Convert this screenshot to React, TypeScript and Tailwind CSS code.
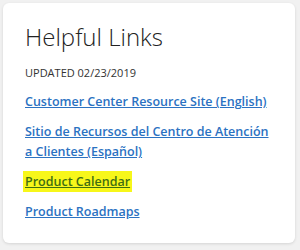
export default function App() {
  return (
    <div className="h-[250px] w-[300px] bg-[#f1f1f1] p-[3px] pr-[5px]">
      <div className="h-[240px] rounded-md bg-white px-[22px] pt-[18px] shadow-[0_1px_3px_rgba(0,0,0,0.12)] font-['Open_Sans',sans-serif]">
        <h2 className="text-[24px] font-light leading-[31px] text-[#222] font-stretch-[90%]">Helpful Links</h2>
        <p className="mt-[13px] text-[11px] leading-[16px] text-[#333]">UPDATED 02/23/2019</p>
        <ul className="mt-[11px] flex flex-col gap-[10px] text-[12.5px] font-semibold leading-[20px] text-[#2b72c2] font-stretch-[94%]">
          <li>
            <a href="#" className="underline">Customer Center Resource Site (English)</a>
          </li>
          <li>
            <a href="#" className="underline">Sitio de Recursos del Centro de Atención a Clientes (Español)</a>
          </li>
          <li>
            <a href="#" className="bg-[#f7f71a] px-[2px] -mx-[2px] py-[2px] text-[#3f6e12] underline">Product Calendar</a>
          </li>
          <li>
            <a href="#" className="underline">Product Roadmaps</a>
          </li>
        </ul>
      </div>
    </div>
  );
}
